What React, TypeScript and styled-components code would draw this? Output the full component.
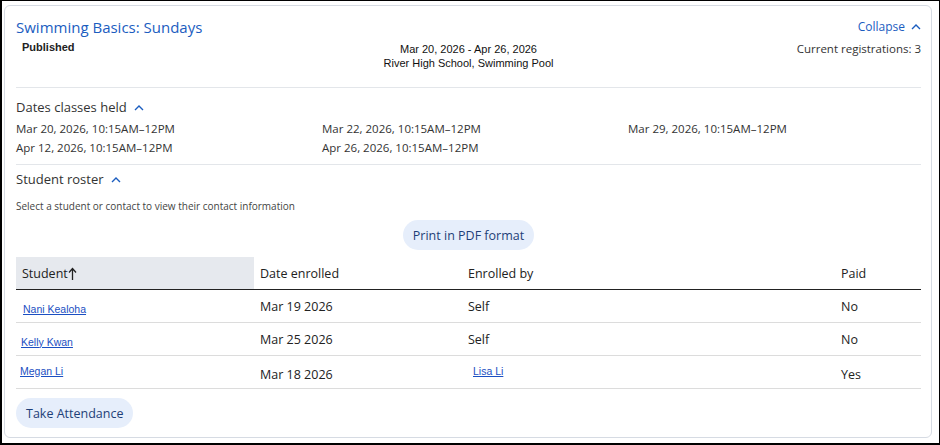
import React from "react";
import styled, { createGlobalStyle } from "styled-components";

const Global = createGlobalStyle`
  html, body { margin: 0; padding: 0; background: #fff; }
  body { font-family: "Open Sans", sans-serif; color: #333; }
`;

const Frame = styled.div`
  width: 940px; height: 445px; box-sizing: border-box;
  border: 1px solid #000; border-left-width: 2px; border-bottom-width: 2px;
  padding: 4px 7px 5px 2px; background: #fff;
`;
const Card = styled.div`
  height: 100%; box-sizing: border-box;
  border: 1px solid #d6dbe3; border-radius: 6px;
  padding: 8px 10px 0 11px;
`;
const Top = styled.div`
  display: grid; grid-template-columns: 1fr auto 1fr; align-items: start;
  padding-bottom: 17px; border-bottom: 1px solid #e3e6ea;
`;
const Title = styled.div`
  font-size: 15px; color: #1b5dbf; font-weight: 500; line-height: 26px;
`;
const Status = styled.div`
  font-family: "Liberation Sans", Arial, sans-serif; font-weight: 700; font-size: 11px;
  color: #222; padding-left: 6px; margin-top: 1px;
`;
const Center = styled.div`
  font-family: "Liberation Sans", Arial, sans-serif; font-size: 11px; color: #111;
  text-align: center; line-height: 14px; padding-top: 28px;
`;
const Right = styled.div`
  display: flex; flex-direction: column; align-items: flex-end; gap: 6px; padding-top: 4px;
`;
const LinkBtn = styled.div`
  display: flex; align-items: center; gap: 6px; color: #1b5dbf; font-size: 12px;
`;
const Reg = styled.div` font-size: 11.5px; color: #333; `;
const SectionHead = styled.div`
  display: flex; align-items: center; gap: 7px; font-size: 13px; color: #333;
  padding: ${p => p.$pt}px 0 0;
`;
const DatesGrid = styled.div`
  display: grid; grid-template-columns: 306px 306px 1fr; row-gap: 4px;
  font-size: 11.5px; color: #333; padding: 5px 0 9px; border-bottom: 1px solid #e3e6ea;
`;
const Hint = styled.div` font-size: 10px; color: #444; margin-top: 11px; `;
const PillRow = styled.div` display: flex; justify-content: center; margin-top: 7px; `;
const Pill = styled.button`
  border: none; background: #e6eefb; color: #1e3f78; border-radius: 16px;
  font-family: "Open Sans", sans-serif; font-size: 12.5px; padding: 0 10px; height: 30px;
`;
const Table = styled.table`
  width: 100%; border-collapse: collapse; margin-top: 7px;
  font-size: 12.5px; color: #222;
`;
const Th = styled.th`
  text-align: left; font-weight: 400; height: 32px; padding: 0 6px;
  background: ${p => (p.$active ? "#e6e9ee" : "transparent")};
  border-bottom: 1px solid #222; width: ${p => p.$w}px;
`;
const Td = styled.td`
  height: 32px; padding: 0 6px; border-bottom: 1px solid #dcdcdc; vertical-align: middle;
`;
const Shift = styled.span`
  position: relative; top: ${p => p.$dy}px;
`;
const NameLink = styled.a`
  font-family: "Liberation Sans", Arial, sans-serif; font-size: 10.5px; color: #1b4fc2;
  text-decoration: underline; position: relative; left: ${p => p.$dx}px; top: ${p => p.$dy}px;
`;
const Foot = styled.div` padding-top: 9px; `;

const Chevron = () => (
  <svg width="10" height="7" viewBox="0 0 10 7"><path d="M1 6 L5 2 L9 6" fill="none" stroke="#1b5dbf" strokeWidth="1.4" /></svg>
);
const Up = () => (
  <svg width="9" height="13" viewBox="0 0 9 13" style={{ verticalAlign: "-2px" }}>
    <path d="M4.5 13 V2 M1 5.5 L4.5 1.5 L8 5.5" fill="none" stroke="#222" strokeWidth="1.3" />
  </svg>
);

const rows = [
  { n: "Nani Kealoha", dx: 1, dy: 2, d: "Mar 19 2026", by: "Self", p: "No" },
  { n: "Kelly Kwan", dx: -1, dy: 2, d: "Mar 25 2026", by: "Self", p: "No" },
  { n: "Megan Li", dx: -2, dy: -2, d: "Mar 18 2026", by: "Lisa Li", p: "Yes" },
];

export default function App() {
  return (
    <Frame>
      <Global />
      <Card>
        <Top>
          <div>
            <Title>Swimming Basics: Sundays</Title>
            <Status>Published</Status>
          </div>
          <Center>Mar 20, 2026 - Apr 26, 2026<br />River High School, Swimming Pool</Center>
          <Right>
            <LinkBtn>Collapse <Chevron /></LinkBtn>
            <Reg>Current registrations: 3</Reg>
          </Right>
        </Top>
        <SectionHead $pt={10}>Dates classes held <Chevron /></SectionHead>
        <DatesGrid>
          <span>Mar 20, 2026, 10:15AM–12PM</span>
          <span>Mar 22, 2026, 10:15AM–12PM</span>
          <span>Mar 29, 2026, 10:15AM–12PM</span>
          <span>Apr 12, 2026, 10:15AM–12PM</span>
          <span>Apr 26, 2026, 10:15AM–12PM</span>
        </DatesGrid>
        <SectionHead $pt={5}>Student roster <Chevron /></SectionHead>
        <Hint>Select a student or contact to view their contact information</Hint>
        <PillRow><Pill>Print in PDF format</Pill></PillRow>
        <Table>
          <thead>
            <tr>
              <Th $active $w={226}>Student<Up /></Th>
              <Th $w={196}>Date enrolled</Th>
              <Th $w={361}>Enrolled by</Th>
              <Th>Paid</Th>
            </tr>
          </thead>
          <tbody>
            {rows.map(r => (
              <tr key={r.n}>
                <Td><NameLink href="#" $dx={r.dx} $dy={r.dy}>{r.n}</NameLink></Td>
                <Td><Shift $dy={r.dy < 0 ? 2 : 0}>{r.d}</Shift></Td>
                <Td>{r.by === "Self" ? r.by : <NameLink href="#" $dx={5} $dy={-2}>{r.by}</NameLink>}</Td>
                <Td><Shift $dy={r.dy < 0 ? 2 : 0}>{r.p}</Shift></Td>
              </tr>
            ))}
          </tbody>
        </Table>
        <Foot><Pill>Take Attendance</Pill></Foot>
      </Card>
    </Frame>
  );
}
